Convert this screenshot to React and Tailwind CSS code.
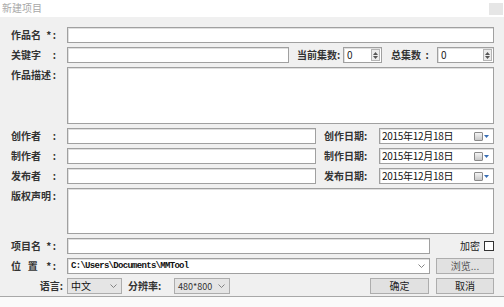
import React from "react";

const F = { fontFamily: '"Noto Sans CJK SC", "Noto Sans", sans-serif' };

function Label({ children, w, className = "" }) {
  return (
    <div className={`shrink-0 text-[10px] leading-none text-[#333] font-bold whitespace-pre ${className}`} style={{ width: w }}>
      {children}
    </div>
  );
}

function RowLabel({ name, suffix, top = false }) {
  return (
    <div className={`shrink-0 w-[57px] h-full flex justify-between pl-[1px] pr-[11px] text-[10px] leading-none text-[#333] font-bold ${top ? "items-start pt-[3px]" : "items-center"}`}>
      <span className="whitespace-pre">{name}</span>
      <span className="whitespace-pre tracking-[1.5px] -mr-[1.5px]">{suffix}</span>
    </div>
  );
}

function Box({ className = "", children }) {
  return (
    <div className={`bg-white border border-[#a0a0a0] shadow-[inset_1px_1px_0_#e0e0e0] ${className}`}>{children}</div>
  );
}

function Spin() {
  return (
    <Box className="h-full w-full flex items-center justify-between pl-[3px] pr-[1px]">
      <span className="text-[10px] leading-none text-[#222]">0</span>
      <div className="w-[9px] h-[12px] border border-[#b5b5b5] bg-[#ececec] flex flex-col items-center justify-center gap-[1px]">
        <svg width="5" height="3" viewBox="0 0 5 3"><path d="M0 3 L2.5 0 L5 3Z" fill="#555" /></svg>
        <svg width="5" height="3" viewBox="0 0 5 3"><path d="M0 0 L2.5 3 L5 0Z" fill="#555" /></svg>
      </div>
    </Box>
  );
}

function DateBox() {
  return (
    <Box className="h-full w-full flex items-center justify-between pl-[2px] pr-[4px]">
      <span className="text-[10px] leading-none text-[#111] tracking-[-0.3px]">2015年12月18日</span>
      <div className="flex items-center gap-[1px]">
        <div className="w-[9px] h-[9px] border border-[#8a8a8a] rounded-[1px] bg-gradient-to-b from-[#f4f4f4] to-[#c9c9c9]" />
        <svg width="5" height="3" viewBox="0 0 5 3"><path d="M0 0 L2.5 3 L5 0Z" fill="#3b6fb5" /></svg>
      </div>
    </Box>
  );
}

function Chevron() {
  return (
    <svg width="7" height="4" viewBox="0 0 7 4"><path d="M0.5 0.5 L3.5 3.5 L6.5 0.5" fill="none" stroke="#777" strokeWidth="0.9" /></svg>
  );
}

function Btn({ children, w }) {
  return (
    <div className="shrink-0 h-full bg-[#e1e1e1] border border-[#adadad] flex items-center justify-center text-[10px] leading-none text-[#222]" style={{ width: w }}>
      {children}
    </div>
  );
}

export default function App() {
  return (
    <div className="w-[504px] h-[307px] bg-white overflow-hidden flex flex-col" style={F}>
      <div className="h-[17px] shrink-0 flex items-start justify-between pl-[2px] pr-[1px] pt-[3px]">
        <span className="text-[10px] leading-none text-[#a8a8a8]">新建项目</span>
        <div className="w-[14px] h-[12px] bg-[#e6e6e6]" />
      </div>
      <div className="h-[280px] shrink-0 bg-[#f0f0f0] border-b border-[#a8a8a8] pt-[10px] pl-[10px] pr-[10px] flex flex-col gap-[4px]">
        <div className="h-[16px] flex items-center">
          <RowLabel name="作品名" suffix="*:" />
          <Box className="h-full flex-1" />
        </div>
        <div className="h-[16px] flex items-center">
          <RowLabel name="关键字" suffix=":" />
          <Box className="h-full w-[222px]" />
          <Label w={54} className="pl-[8px]">当前集数:</Label>
          <div className="h-full w-[39px]"><Spin /></div>
          <Label w={55} className="pl-[9px]">总集数  :</Label>
          <div className="h-full flex-1"><Spin /></div>
        </div>
        <div className="h-[57px] flex items-start">
          <RowLabel name="作品描述" suffix=":" top />
          <Box className="h-full flex-1" />
        </div>
        {[["创作者", "创作日期:"], ["制作者", "制作日期:"], ["发布者", "发布日期:"]].map(([a, b]) => (
          <div key={a} className="h-[16px] flex items-center">
            <RowLabel name={a} suffix=":" />
            <Box className="h-full w-[249px]" />
            <Label w={63} className="pl-[8px]">{b}</Label>
            <div className="h-full flex-1"><DateBox /></div>
          </div>
        ))}
        <div className="h-[46px] flex items-start">
          <RowLabel name="版权声明" suffix=":" top />
          <Box className="h-full flex-1" />
        </div>
        <div className="h-[16px] flex items-center">
          <RowLabel name="项目名" suffix="*:" />
          <Box className="h-full w-[363px]" />
          <div className="flex-1 flex items-center justify-end gap-[4px]">
            <span className="text-[10px] leading-none text-[#222]">加密</span>
            <div className="w-[10px] h-[10px] bg-white border border-[#333]" />
          </div>
        </div>
        <div className="h-[16px] flex items-center">
          <RowLabel name="位   置" suffix="*:" />
          <Box className="h-full w-[363px] flex items-center justify-between pl-[3px] pr-[4px]">
            <span className="text-[9px] leading-none text-[#111] font-bold tracking-[-0.7px]" style={{ fontFamily: '"Liberation Mono", monospace' }}>C:\Users\Documents\MMTool</span>
            <Chevron />
          </Box>
          <div className="flex-1" />
          <Btn w={58}><span className="text-[#555]">浏览...</span></Btn>
        </div>
        <div className="h-[16px] flex items-center">
          <Label w={57} className="text-right pr-[4px]">语言:</Label>
          <div className="h-full w-[55px] bg-[#e5e5e5] border border-[#adadad] flex items-center justify-between pl-[3px] pr-[4px]">
            <span className="text-[10px] leading-none text-[#111]">中文</span>
            <Chevron />
          </div>
          <Label w={52} className="pl-[6px]">分辨率:</Label>
          <div className="h-full w-[56px] bg-[#e5e5e5] border border-[#adadad] flex items-center justify-between pl-[3px] pr-[4px]">
            <span className="text-[9px] leading-none text-[#333]">480*800</span>
            <Chevron />
          </div>
          <div className="flex-1" />
          <Btn w={59}>确定</Btn>
          <div className="w-[7px]" />
          <Btn w={58}>取消</Btn>
        </div>
      </div>
      <div className="flex-1 bg-[#fafafa]" />
    </div>
  );
}
